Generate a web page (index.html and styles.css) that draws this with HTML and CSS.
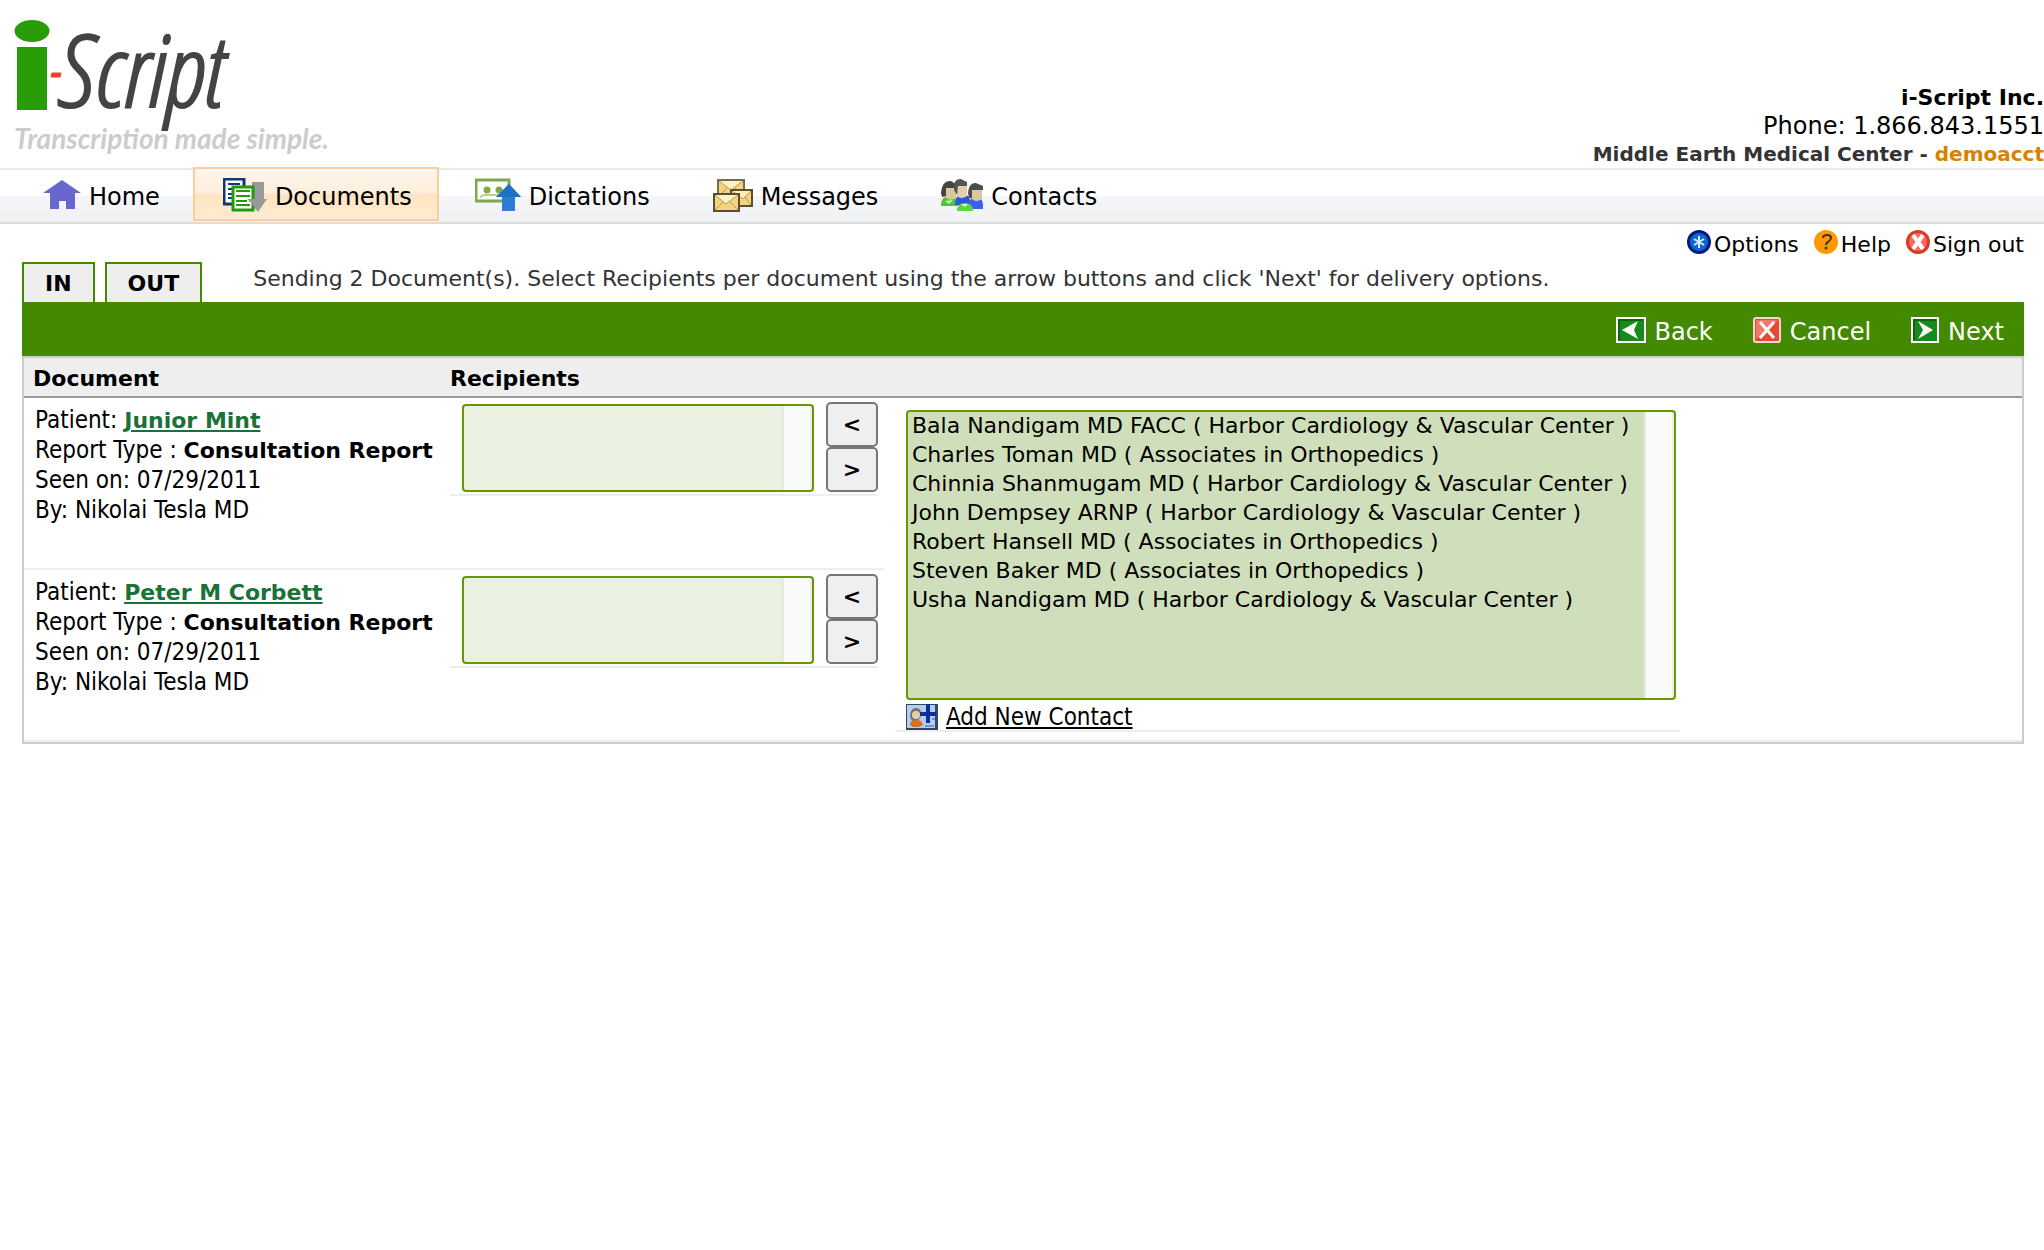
FILE: index.html
```html
<!DOCTYPE html>
<html lang="en">
  <head>
    <meta charset="UTF-8" />
    <meta name="viewport" content="width=device-width, initial-scale=1.0" />
    <title>i-Script</title>
    <link rel="stylesheet" href="styles.css">
  </head>
  <body>
    <header class="header">
      <a class="logo" href="#">
        <span class="logo-name">
          <svg class="logo-i" viewBox="0 0 48 92" aria-hidden="true">
            <ellipse cx="18" cy="11" rx="17.500" ry="11" fill="#289c06" />
            <rect x="3" y="27" width="30" height="63" fill="#289c06" />
            <path d="M38 53h9l-1 4h-9z" fill="#f0402c" stroke="#f0402c" />
          </svg>
          <span class="logo-script">Script</span>
        </span>
        <span class="tagline">Transcription made simple.</span>
      </a>
      <div class="company">
        <div class="company-name">i-Script Inc.</div>
        <div class="company-phone">Phone: 1.866.843.1551</div>
        <div class="account">Middle Earth Medical Center - <span class="account-user">demoacct</span></div>
      </div>
    </header>

    <nav class="nav">
      <a class="nav-item" href="#">
        <svg width="38" height="32" viewBox="0 0 38 32">
          <path d="M19 1L0 14h7v16h9v-8h7v8h9V14h6z" fill="#6767cf" />
        </svg>
        <span>Home</span>
      </a>
      <a class="nav-item active" href="#">
        <svg width="44" height="34" viewBox="0 0 44 34">
          <rect x="1" y="1" width="20" height="25" fill="#fff" stroke="#0e3a75" stroke-width="3" />
          <path d="M5 6h12M5 11h6M5 16h4M5 20h4" stroke="#0e3a75" stroke-width="2" />
          <path d="M29 4h12v17h3l-9 13-10-12h4z" fill="#999" />
          <rect x="10" y="9" width="20" height="23" fill="#fff" stroke="#229a0b" stroke-width="3" />
          <path d="M13 13h14M13 18h14M13 23h11M13 27h14" stroke="#229a0b" stroke-width="2" />
          <path d="M32 17v4h-8l8 8z" fill="#999" />
        </svg>
        <span>Documents</span>
      </a>
      <a class="nav-item" href="#">
        <svg width="46" height="34" viewBox="0 0 46 34">
          <rect x="1" y="2" width="33" height="21" fill="#fff" stroke="#7fa84a" stroke-width="3" />
          <circle cx="12" cy="12" r="3.500" fill="#7fa84a" />
          <circle cx="24" cy="12" r="3.500" fill="#7fa84a" />
          <path d="M5 19l4-2h18" fill="none" stroke="#b9d09b" stroke-width="2" />
          <path d="M34 6l12 13h-6v14H27V19h-6z" fill="#2c7dd5" />
          <path d="M34 6l12 13H21z" fill="#2270c4" />
        </svg>
        <span>Dictations</span>
      </a>
      <a class="nav-item" href="#">
        <svg width="40" height="34" viewBox="0 0 40 34">
          <g fill="#f3d57f" stroke="#7a6a48" stroke-width="2">
            <path d="M5 2h26v17H5z" />
            <path d="M6 3l12 9L30 3M6 18l8-8M30 18l-8-8" fill="#fff3c4" stroke="#b39758" stroke-width="1" />
            <path d="M18 12h21v16H18z" stroke="#5d4e33" />
            <path d="M19 13l11 8 8-8M19 27l7-8M38 27l-6-8" fill="#ffefb5" stroke="#b39758" stroke-width="1" />
            <path d="M1 16h25v17H1z" stroke="#5d4e33" />
            <path d="M2 17l11 9 12-9M2 32l8-8M25 32l-8-8" fill="#fff3c4" stroke="#b39758" stroke-width="1" />
          </g>
        </svg>
        <span>Messages</span>
      </a>
      <a class="nav-item" href="#">
        <svg width="42" height="34" viewBox="0 0 42 34">
          <path d="M0 28q0-10 8-10t9 10z" fill="#4fc42e" />
          <path d="M4 9h11v11q-6 4-11-1z" fill="#dcc8a0" />
          <path d="M0 15Q1 2 10 3l6 4v3L5 10v8l-4 1z" fill="#444" />
          <path d="M14 27q0-11 8-11t7 11z" fill="#2f55dc" />
          <path d="M15 7h11v11q-6 4-10 0z" fill="#e3cfa8" />
          <path d="M13 12Q12 0 20 1l6 3v4H17l-1 9z" fill="#555" />
          <path d="M27 31q0-12 8-12t7 12z" fill="#3b62e8" />
          <path d="M30 11h11v10q-6 4-10 0z" fill="#dcc8a0" />
          <path d="M27 15Q28 4 35 5l7 3v4H31v8h-3z" fill="#4c4c4c" />
          <path d="M16 33q0-8 8-8t8 8z" fill="#5fd83a" />
          <path d="M20 26l4 3 3-3" fill="#dff5d4" />
          <path d="M4 23l4 3 4-4" fill="#c9f2ba" />
        </svg>
        <span>Contacts</span>
      </a>
    </nav>

    <div class="user-links">
      <a href="#">
        <svg width="24" height="24" viewBox="0 0 24 24">
          <circle cx="12" cy="12" r="12" fill="#001a80" />
          <circle cx="12" cy="12" r="9" fill="#1066d0" />
          <path d="M12 6v12M7 9l10 6M17 9L7 15" stroke="#d8ecff" stroke-width="2" />
        </svg>Options
      </a>
      <a href="#">
        <svg width="24" height="24" viewBox="0 0 24 24">
          <circle cx="12" cy="12" r="12" fill="#ff9900" />
          <path d="M9 8q0-3 4-3t4 3q0 2-3 4-2 1-2 3" fill="none" stroke="#4a3213" stroke-width="2" />
          <circle cx="12" cy="18" r="1.500" fill="#4a3213" />
        </svg>Help
      </a>
      <a href="#">
        <svg width="24" height="24" viewBox="0 0 24 24">
          <circle cx="12" cy="12" r="12" fill="#d63c20" />
          <circle cx="12" cy="12" r="9" fill="#fb6a62" />
          <path d="M7 5l10 14M17 5L7 19" stroke="#fff" stroke-width="4" />
        </svg>Sign out
      </a>
    </div>

    <main class="content">
      <div class="tabs">
        <a class="tab" href="#">IN</a>
        <a class="tab" href="#">OUT</a>
        <p class="hint">Sending 2 Document(s). Select Recipients per document using the arrow buttons and click 'Next' for delivery options.</p>
      </div>

      <div class="toolbar">
        <button class="tool" type="button">
          <svg width="30" height="26" viewBox="0 0 30 26">
            <rect x="1" y="1" width="28" height="24" fill="#178a1c" stroke="#fff" stroke-width="2" />
            <path d="M3 23V3h24" fill="none" stroke="#0b6410" stroke-width="2" />
            <path d="M22 4L6 13l16 9-4-9z" fill="#fff" />
          </svg>
          <span>Back</span>
        </button>
        <button class="tool" type="button">
          <svg width="28" height="26" viewBox="0 0 28 26">
            <rect x="1" y="1" width="26" height="24" rx="2" fill="#e64a35" stroke="#f9d7d0" stroke-width="2" />
            <path d="M3 3h22L3 22z" fill="#f0796a" />
            <path d="M7 5l14 16M21 5L7 21" stroke="#fff" stroke-width="3" />
          </svg>
          <span>Cancel</span>
        </button>
        <button class="tool" type="button">
          <svg width="28" height="26" viewBox="0 0 28 26">
            <rect x="1" y="1" width="26" height="24" fill="#178a1c" stroke="#fff" stroke-width="2" />
            <path d="M3 23V3h22" fill="none" stroke="#0b6410" stroke-width="2" />
            <path d="M7 4l15 9-15 9 5-9z" fill="#fff" />
          </svg>
          <span>Next</span>
        </button>
      </div>

      <table class="documents">
        <thead>
          <tr>
            <th class="col-document">Document</th>
            <th class="col-recipients">Recipients</th>
            <th></th>
          </tr>
        </thead>
        <tbody>
          <tr>
            <td class="document">
              Patient: <a href="#">Junior Mint</a><br />
              Report Type : <b>Consultation Report</b><br />
              Seen on: 07/29/2011<br />
              By: Nikolai Tesla MD
            </td>
            <td class="recipients">
              <div class="picker">
                <select class="recipient-list" multiple aria-label="Recipients for Junior Mint"></select>
                <div class="arrows">
                  <button type="button">&lt;</button>
                  <button type="button">&gt;</button>
                </div>
              </div>
            </td>
            <td class="contacts" rowspan="2">
              <div class="contacts-box">
                <select class="contact-list" multiple aria-label="Contacts">
                  <option>Bala Nandigam MD FACC ( Harbor Cardiology &amp; Vascular Center )</option>
                  <option>Charles Toman MD ( Associates in Orthopedics )</option>
                  <option>Chinnia Shanmugam MD ( Harbor Cardiology &amp; Vascular Center )</option>
                  <option>John Dempsey ARNP ( Harbor Cardiology &amp; Vascular Center )</option>
                  <option>Robert Hansell MD ( Associates in Orthopedics )</option>
                  <option>Steven Baker MD ( Associates in Orthopedics )</option>
                  <option>Usha Nandigam MD ( Harbor Cardiology &amp; Vascular Center )</option>
                </select>
                <a class="add-contact" href="#">
                  <svg width="32" height="26" viewBox="0 0 32 26">
                    <rect width="32" height="26" fill="#33455f" />
                    <rect x="1" y="1" width="28" height="23" fill="#b4cdf2" />
                    <path d="M4 13q0-9 6-9t5 8l-3 5H6z" fill="#77736c" />
                    <circle cx="10" cy="11" r="4" fill="#e5d0ab" />
                    <path d="M4 21q0-5 6-5t7 5l-4 2H7z" fill="#d9701c" />
                    <path d="M22 0v19M14 10h16" stroke="#0c2f9c" stroke-width="4" />
                    <path d="M19 22h9M26 15h3" stroke="#6f91cf" stroke-width="2" />
                  </svg>
                  <span>Add New Contact</span>
                </a>
              </div>
            </td>
          </tr>
          <tr>
            <td class="document">
              Patient: <a href="#">Peter M Corbett</a><br />
              Report Type : <b>Consultation Report</b><br />
              Seen on: 07/29/2011<br />
              By: Nikolai Tesla MD
            </td>
            <td class="recipients">
              <div class="picker">
                <select class="recipient-list" multiple aria-label="Recipients for Peter M Corbett"></select>
                <div class="arrows">
                  <button type="button">&lt;</button>
                  <button type="button">&gt;</button>
                </div>
              </div>
            </td>
          </tr>
        </tbody>
      </table>
    </main>
  </body>
</html>
```
FILE: styles.css
```css
* {
  margin: 0;
  padding: 0;
  box-sizing: border-box;
}

body {
  font-family: Verdana, "DejaVu Sans", sans-serif;
  font-size: 22px;
  color: #000;
  background: #fff;
}

a {
  color: inherit;
  text-decoration: none;
}

svg {
  display: block;
  flex: none;
}

/* Header */
.header {
  display: flex;
  justify-content: space-between;
  align-items: flex-end;
  height: 168px;
}

.logo {
  display: flex;
  flex-direction: column;
  padding: 0 0 16px 14px;
}

.logo-name {
  display: flex;
  align-items: flex-start;
  height: 104px;
}

.logo-i {
  width: 48px;
  height: 92px;
  margin-right: -4px;
}

.logo-script {
  font: italic 300 100px/96px "Open Sans Condensed Light", "Open Sans Condensed", Lato, sans-serif;
  color: #444;
  -webkit-text-stroke: 2px #444;
}

.tagline {
  font: italic bold 28px/28px Lato, sans-serif;
  color: #ccc;
}

.company {
  text-align: right;
}

.company-name {
  font-weight: bold;
  line-height: 28px;
}

.company-phone {
  font-size: 24px;
  line-height: 28px;
}

.account {
  font-size: 20px;
  font-weight: bold;
  line-height: 28px;
  color: #333;
}

.account-user {
  color: #d98200;
}

/* Main navigation */
.nav {
  display: flex;
  align-items: center;
  gap: 6px;
  height: 56px;
  padding-left: 13px;
  border-top: 2px solid #ebebeb;
  border-bottom: 2px solid #ddd;
  background: linear-gradient(#fff 50%, #f5f6f9 50%, #f0f1f3);
}

.nav-item {
  display: flex;
  align-items: center;
  gap: 8px;
  height: 54px;
  margin-top: -4px;
  padding: 2px 25px 0 28px;
  border: 2px solid transparent;
  font-size: 24px;
}

.nav-item span,
.tool span {
  padding-top: 3px;
}

.nav-item.active {
  border-color: #fc9;
  background: linear-gradient(#fff6ec, #ffeedb 50%, #ffe4c0 50%, #ffebd2);
}

/* Options, help, sign out */
.user-links {
  display: flex;
  justify-content: flex-end;
  gap: 15px;
  height: 38px;
  padding: 6px 20px 0;
}

.user-links a {
  display: flex;
  gap: 3px;
  line-height: 30px;
}

/* Tabs and green toolbar */
.content {
  padding: 0 20px 0 22px;
}

.tabs {
  display: flex;
  gap: 10px;
}

.tab {
  height: 40px;
  padding: 0 21px;
  border: 2px solid #448a00;
  border-bottom: none;
  background: #eee;
  font-weight: bold;
  line-height: 40px;
}

.hint {
  margin-left: 41px;
  line-height: 34px;
  color: #333;
}

.toolbar {
  display: flex;
  justify-content: flex-end;
  gap: 40px;
  height: 54px;
  padding: 2px 20px 0;
  background: #448a00;
}

.tool {
  display: flex;
  align-items: center;
  gap: 9px;
  border: none;
  background: none;
  font: inherit;
  font-size: 24px;
  color: #fff;
  cursor: pointer;
}

/* Documents table */
.documents {
  width: 100%;
  border: 2px solid #ccc;
  border-spacing: 0;
}

.documents th {
  height: 40px;
  padding-top: 2px;
  border-bottom: 2px solid #999;
  background: #eee;
  text-align: left;
}

.documents td {
  height: 172px;
  border-bottom: 2px solid #eee;
  vertical-align: top;
}

.documents .col-document {
  width: 426px;
  padding-left: 9px;
}

.col-recipients {
  width: 434px;
}

.document {
  padding: 7px 0 0 11px;
  font: 24px/30px Tahoma, "DejaVu Sans Condensed", sans-serif;
}

.document a,
.document b {
  font: bold 22px/22px Verdana, "DejaVu Sans", sans-serif;
}

.document a {
  color: #1a7238;
  text-decoration: underline;
}

.picker {
  display: flex;
  justify-content: space-between;
  align-items: flex-end;
  margin-right: 6px;
  padding: 4px 0 2px 12px;
  border-bottom: 2px solid #eee;
}

select {
  display: block;
  border: 2px solid #690;
  border-radius: 4px;
  font: inherit;
  overflow: hidden;
}

/* lists keep an empty scrollbar track on the right */
.recipient-list {
  width: 352px;
  height: 88px;
  background: linear-gradient(to left, #ededed 2px, #fafafa 2px 28px, #e8e8e8 28px 30px, #eaf1e0 30px);
}

.contact-list {
  width: 770px;
  height: 290px;
  padding-top: 1px;
  background: linear-gradient(to left, #ededed 2px, #fafafa 2px 28px, #e8e8e8 28px 30px, #d0dfbb 30px);
}

.contact-list option {
  height: 29px;
  padding: 0 4px;
  line-height: 29px;
  color: #000;
}

.arrows {
  display: flex;
  flex-direction: column;
}

.arrows button {
  width: 52px;
  height: 45px;
  border: 2px solid #767676;
  border-radius: 5px;
  background: #efefef;
  font: bold 22px Verdana, "DejaVu Sans", sans-serif;
}

.documents .contacts {
  padding: 12px 12px 0;
}

.contacts-box {
  width: 784px;
  padding-left: 10px;
  border-bottom: 2px solid #eee;
}

.add-contact {
  display: flex;
  gap: 8px;
  padding-top: 4px;
  font: 24px/26px Tahoma, "DejaVu Sans Condensed", sans-serif;
  text-decoration: underline;
}
```
